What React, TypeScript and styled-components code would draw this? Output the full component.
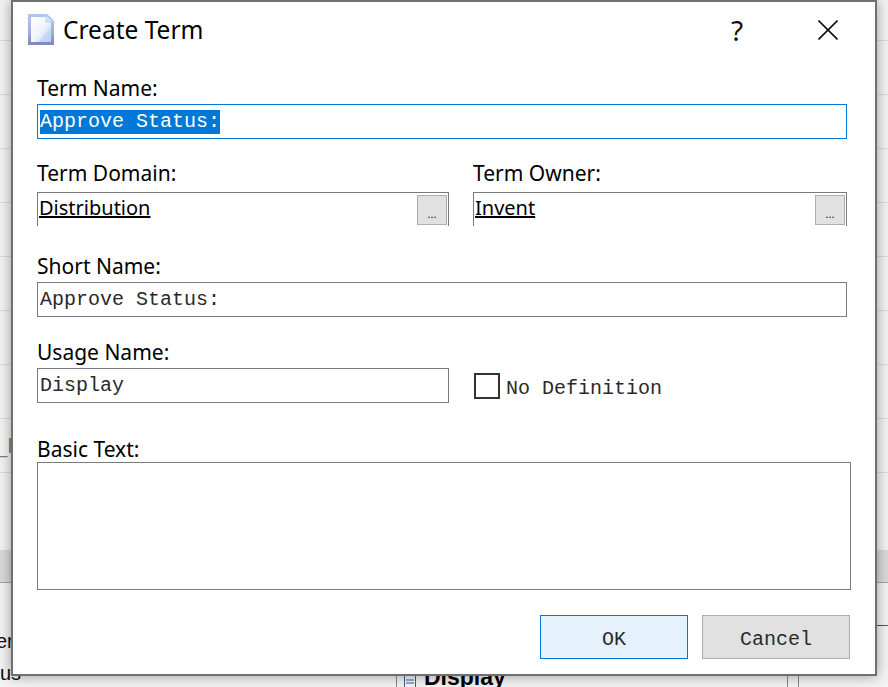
import React from "react";
import styled, { createGlobalStyle } from "styled-components";

const Global = createGlobalStyle`
  html, body { margin: 0; padding: 0; background: #f4f4f4; }
  body { width: 888px; height: 687px; overflow: hidden; font-family: "Noto Sans", "Open Sans", sans-serif; }
`;

const Page = styled.div`
  position: relative;
  width: 888px;
  height: 687px;
  overflow: hidden;
  background: #f4f4f4;
`;

const Table = styled.div`
  display: flex;
  flex-direction: column;
`;

const Row = styled.div<{ $h: number }>`
  height: ${(p) => p.$h}px;
  box-sizing: border-box;
  border-bottom: 1px solid #dcdcdc;
  display: flex;
  align-items: center;
`;

const RowText = styled.span`
  font: 22px/22px "Liberation Sans", sans-serif;
  color: #808080;
  margin-left: -5px;
`;

const Band = styled.div`
  height: 32px;
  margin-top: 77px;
  background: #dadada;
  border-bottom: 1px solid #a8a8a8;
`;

const Lower = styled.div`
  display: flex;
  height: 105px;
  justify-content: space-between;
`;

const TreeList = styled.div`
  display: flex;
  flex-direction: column;
  font: 20px/32px "Liberation Sans", sans-serif;
  color: #111;
  padding-top: 42px;
`;

const TreeItem = styled.span<{ $shift: number }>`
  margin-left: ${(p) => p.$shift}px;
`;

const Detail = styled.div`
  box-sizing: border-box;
  width: 492px;
  margin-top: 42px;
  border-top: 1px solid #555;
  border-left: 1px solid #8a8a8a;
  display: flex;
  padding-left: 7px;
`;

const DetailMain = styled.div`
  width: 383px;
  display: flex;
  align-items: flex-start;
  padding-top: 40px;
`;

const DetailIcon = styled.div`
  margin-top: 9px;
  display: flex;
`;

const DetailTitle = styled.span`
  font: bold 23px/23px "Liberation Sans", sans-serif;
  color: #000;
  margin-left: 8px;
`;

const ScrollRail = styled.div`
  width: 10px;
  border-left: 1px solid #8a8a8a;
  border-right: 1px solid #8a8a8a;
`;

const Dialog = styled.div`
  position: absolute;
  left: 11px;
  top: 0;
  width: 866px;
  height: 676px;
  box-sizing: border-box;
  background: #fff;
  border: 2px solid #6f6f6f;
  box-shadow: 0 0 13px rgba(0, 0, 0, 0.38);
`;

const TitleBar = styled.div`
  height: 55px;
  display: flex;
  align-items: center;
  padding: 0 37px 0 15px;
`;

const TitleText = styled.div`
  font-size: 24.5px;
  color: #000;
  margin-left: 9px;
  flex: 1;
`;

const Help = styled.div`
  font-size: 28px;
  line-height: 30px;
  color: #111;
  width: 24px;
  text-align: center;
  margin-right: 69px;
`;

const Form = styled.div`
  display: flex;
  flex-direction: column;
  padding: 21px 28px 0 24px;
`;

const FieldRow = styled.div<{ $top: number }>`
  display: flex;
  gap: 24px;
  margin-top: ${(p) => p.$top}px;
`;

const Field = styled.div<{ $w?: number }>`
  display: flex;
  flex-direction: column;
  width: ${(p) => (p.$w ? `${p.$w}px` : "100%")};
`;

const Label = styled.div<{ $h?: number }>`
  height: ${(p) => p.$h ?? 26}px;
  line-height: 20px;
  font-size: 21px;
  color: #000;
`;

const TextBox = styled.div<{ $focus?: boolean }>`
  box-sizing: border-box;
  height: 35px;
  width: 100%;
  border: 1px solid ${(p) => (p.$focus ? "#0078d7" : "#7a7a7a")};
  padding: 0 2px;
  display: flex;
  align-items: center;
  font: 20px/24px "Liberation Mono", monospace;
  color: #2a2a2a;
  white-space: pre;
`;

const Selected = styled.span`
  background: #0078d7;
  color: #fff;
`;

const Picker = styled.div`
  box-sizing: border-box;
  height: 34px;
  border: 1px solid #7a7a7a;
  border-bottom: none;
  padding: 1px 1px 0 1px;
  display: flex;
  justify-content: space-between;
  align-items: flex-start;
`;

const PickerLink = styled.span`
  font-size: 20px;
  line-height: 28px;
  color: #000;
  text-decoration: underline;
`;

const DotsButton = styled.div`
  box-sizing: border-box;
  width: 30px;
  height: 30px;
  margin-top: 1px;
  background: #e1e1e1;
  border: 1px solid #adadad;
  font-size: 11px;
  line-height: 36px;
  text-align: center;
  color: #111;
`;

const CheckField = styled.div`
  display: flex;
  align-items: center;
  align-self: flex-end;
  height: 35px;
  gap: 6px;
  padding-left: 1px;
`;

const CheckBox = styled.div`
  box-sizing: border-box;
  width: 26px;
  height: 26px;
  border: 2px solid #333;
`;

const CheckLabel = styled.span`
  font: 20px "Liberation Mono", monospace;
  color: #2a2a2a;
  padding-top: 6px;
`;

const Memo = styled.div`
  box-sizing: border-box;
  width: 814px;
  height: 128px;
  border: 1px solid #7a7a7a;
`;

const Buttons = styled.div`
  display: flex;
  justify-content: flex-end;
  gap: 14px;
  margin-top: 25px;
  margin-right: -3px;
`;

const Button = styled.div<{ $primary?: boolean }>`
  box-sizing: border-box;
  width: 148px;
  height: 44px;
  background: ${(p) => (p.$primary ? "#e5f1fb" : "#e1e1e1")};
  border: 1px solid ${(p) => (p.$primary ? "#0078d7" : "#adadad")};
  font: 20px/47px "Liberation Mono", monospace;
  text-align: center;
  color: #2a2a2a;
`;

const DocIcon = () => (
  <svg width="26" height="31" viewBox="0 0 26 31" aria-hidden="true">
    <defs>
      <linearGradient id="docFill" x1="0" y1="0" x2="1" y2="1">
        <stop offset="0" stopColor="#ffffff" />
        <stop offset="0.5" stopColor="#f1f6fc" />
        <stop offset="0.75" stopColor="#cfe1f7" />
        <stop offset="1" stopColor="#a8c9f0" />
      </linearGradient>
      <linearGradient id="docEdge" x1="0" y1="0" x2="0" y2="1">
        <stop offset="0" stopColor="#a9c8ee" />
        <stop offset="0.6" stopColor="#a9a9dc" />
        <stop offset="1" stopColor="#8488bc" />
      </linearGradient>
    </defs>
    <path d="M1.5 1.5h17l6 6v22h-23z" fill="url(#docFill)" stroke="url(#docEdge)" strokeWidth="3" />
    <path d="M18 1v7h7z" fill="#d5e4f7" stroke="#b4cfef" strokeWidth="1" />
    <path d="M10 28L23 13v15z" fill="#b6d2f3" opacity="0.55" />
  </svg>
);

const CloseIcon = () => (
  <svg width="20" height="20" viewBox="0 0 20 20" aria-hidden="true">
    <path d="M0.5 0.5L19.5 19.5M19.5 0.5L0.5 19.5" stroke="#111" strokeWidth="1.6" fill="none" />
  </svg>
);

const ListIcon = () => (
  <svg width="12" height="14" viewBox="0 0 12 14" aria-hidden="true">
    <rect x="0.5" y="0.5" width="11" height="13" fill="#f4f8fc" stroke="#3b5c92" />
    <path d="M2 5h8M2 8h8" stroke="#3b5c92" />
  </svg>
);

export default function App() {
  return (
    <Page>
      <Global />
      <Table>
        <Row $h={41} />
        <Row $h={54} />
        <Row $h={54} />
        <Row $h={54} />
        <Row $h={54} />
        <Row $h={54} />
        <Row $h={54} />
        <Row $h={54} />
        <Row $h={54}>
          <RowText>_F</RowText>
        </Row>
      </Table>
      <Band />
      <Lower>
        <TreeList>
          <TreeItem $shift={-4}>er</TreeItem>
          <TreeItem $shift={0}>us</TreeItem>
        </TreeList>
        <Detail>
          <DetailMain>
            <DetailIcon>
              <ListIcon />
            </DetailIcon>
            <DetailTitle>Display</DetailTitle>
          </DetailMain>
          <ScrollRail />
        </Detail>
      </Lower>
      <Dialog>
        <TitleBar>
          <DocIcon />
          <TitleText>Create Term</TitleText>
          <Help>?</Help>
          <CloseIcon />
        </TitleBar>
        <Form>
          <Field>
            <Label>Term Name:</Label>
            <TextBox $focus>
              <Selected>Approve Status:</Selected>
            </TextBox>
          </Field>
          <FieldRow $top={24}>
            <Field $w={412}>
              <Label $h={29}>Term Domain:</Label>
              <Picker>
                <PickerLink>Distribution</PickerLink>
                <DotsButton>...</DotsButton>
              </Picker>
            </Field>
            <Field $w={374}>
              <Label $h={29}>Term Owner:</Label>
              <Picker>
                <PickerLink>Invent</PickerLink>
                <DotsButton>...</DotsButton>
              </Picker>
            </Field>
          </FieldRow>
          <FieldRow $top={30}>
            <Field>
              <Label>Short Name:</Label>
              <TextBox>Approve Status:</TextBox>
            </Field>
          </FieldRow>
          <FieldRow $top={25}>
            <Field $w={412}>
              <Label>Usage Name:</Label>
              <TextBox>Display</TextBox>
            </Field>
            <CheckField>
              <CheckBox />
              <CheckLabel>No Definition</CheckLabel>
            </CheckField>
          </FieldRow>
          <FieldRow $top={36}>
            <Field>
              <Label $h={23}>Basic Text:</Label>
              <Memo />
            </Field>
          </FieldRow>
          <Buttons>
            <Button $primary>OK</Button>
            <Button>Cancel</Button>
          </Buttons>
        </Form>
      </Dialog>
    </Page>
  );
}
